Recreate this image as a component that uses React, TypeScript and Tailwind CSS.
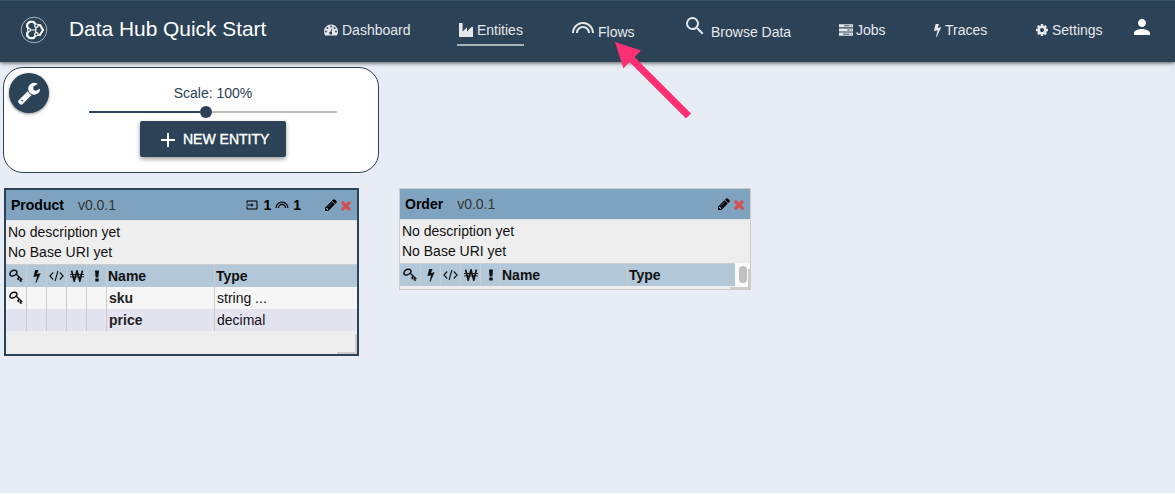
import type { ReactNode } from "react";
import { MdAdd, MdInput, MdLooks, MdPerson, MdSearch } from "react-icons/md";

type IconProps = { className?: string };

function Glyph({ d, box = "0 0 1792 1792", className }: IconProps & { d: string; box?: string }) {
  return (
    <svg viewBox={box} fill="currentColor" className={className}>
      <path d={d} />
    </svg>
  );
}

const BOLT =
  "M885 566q18 20 7 44l-540 1157q-13 25-42 25-4 0-14-2-17-5-25.5-19t-4.5-30l197-808-406 101q-4 1-12 1-18 0-31-11-18-15-13-39l201-825q4-16 18-26t32-10h328q19 0 32 12.5t13 29.5q0 8-5 18l-171 463 396-98q8-2 12-2 19 0 34 15z";
const CLOSE =
  "M1298 1322q0 40-28 68l-136 136q-28 28-68 28t-68-28l-294-294-294 294q-28 28-68 28t-68-28l-136-136q-28-28-28-68t28-68l294-294-294-294q-28-28-28-68t28-68l136-136q28-28 68-28t68 28l294 294 294-294q28-28 68-28t68 28l136 136q28 28 28 68t-28 68l-294 294 294 294q28 28 28 68z";
const PENCIL =
  "M491 1536l91-91-235-235-91 91v107h128v128h107zm523-928q0-22-22-22-10 0-17 7l-542 542q-7 7-7 17 0 22 22 22 10 0 17-7l542-542q7-7 7-17zm-54-192l416 416-832 832h-416v-416zm683 96q0 53-37 90l-166 166-416-416 166-165q36-38 90-38 53 0 91 38l235 234q37 39 37 91z";
const COG =
  "M1152 896q0-106-75-181t-181-75-181 75-75 181 75 181 181 75 181-75 75-181zm512-109v222q0 12-8 23t-20 13l-185 28q-19 54-39 91 35 50 107 138 10 12 10 25t-9 23q-27 37-99 108t-94 71q-12 0-26-9l-138-108q-44 23-91 38-16 136-29 186-7 28-36 28h-222q-14 0-24.5-8.5t-11.5-21.5l-28-184q-49-16-90-37l-141 107q-10 9-25 9-14 0-25-11-126-114-165-168-7-10-7-23 0-12 8-23 15-21 51-66.5t54-70.5q-27-50-41-99l-183-27q-13-2-21-12.5t-8-23.5v-222q0-12 8-23t19-13l186-28q14-46 39-92-40-57-107-138-10-12-10-24 0-10 9-23 26-36 98.5-107.5t94.5-71.5q13 0 26 10l138 107q44-23 91-38 16-136 29-186 7-28 36-28h222q14 0 24.5 8.5t11.5 21.5l28 184q49 16 90 37l142-107q9-9 24-9 13 0 25 10 129 119 165 170 7 8 7 22 0 12-8 23-15 21-51 66.5t-54 70.5q26 50 41 98l183 28q13 2 21 12.5t8 23.5z";
const WRENCH =
  "M448 1472q0-26-19-45t-45-19-45 19-19 45 19 45 45 19 45-19 19-45zm644-420l-682 682q-37 37-90 37-52 0-91-37l-106-108q-38-36-38-90 0-53 38-91l681-681q39 98 114.5 173.5t173.5 114.5zm634-435q0 39-23 106-47 134-164.5 217.5t-258.5 83.5q-185 0-316.5-131.5t-131.5-316.5 131.5-316.5 316.5-131.5q58 0 121.5 16.5t107.5 46.5q16 11 16 28t-16 28l-293 169v224l193 107q5-3 79-48.5t135.5-81 70.5-35.5q15 0 23.5 10t8.5 25z";

function Logo() {
  return (
    <svg viewBox="0 0 28 28" fill="none" stroke="#fff" className="size-7">
      <circle cx="14" cy="14" r="12.8" stroke="#a5b0ba" strokeWidth="1" />
      <path
        d="M15.2 8 13.6 5.9H9.4L7.2 8.3v2.6l1.6 2M8.8 15.1l-1.6 2v2.6l2.2 2.4h4.2l1.6-2.1M18 9h2l3 5-3 5h-2"
        strokeWidth="2.2"
        strokeLinejoin="round"
      />
      <path d="M10 14h5.5M15.8 11.4v5.2" strokeWidth="1.2" />
      <circle cx="9" cy="14" r="1.5" fill="#2c4256" strokeWidth="1.2" />
      <circle cx="16.4" cy="9.7" r="1.7" fill="#2c4256" strokeWidth="1.2" />
      <circle cx="16.4" cy="18.3" r="1.7" fill="#2c4256" strokeWidth="1.2" />
    </svg>
  );
}

function Gauge() {
  return (
    <svg viewBox="0 0 14 12" className="h-3 w-3.5">
      <path d="M7 0.5a7 7 0 0 0-7 7c0 1.4.4 2.7 1.1 3.8.1.2.3.2.5.2h10.8c.2 0 .4 0 .5-.2A7 7 0 0 0 7 .5z" fill="currentColor" />
      <g fill="#2c4256">
        <circle cx="2" cy="7.5" r="0.95" />
        <circle cx="3.5" cy="4" r="0.95" />
        <circle cx="7" cy="2.5" r="0.95" />
        <circle cx="10.5" cy="4" r="0.95" />
        <circle cx="12" cy="7.5" r="0.95" />
        <circle cx="6.7" cy="9" r="1.5" />
      </g>
      <path d="M6.8 8.8 7.9 4.7" stroke="#2c4256" strokeWidth="0.9" />
    </svg>
  );
}

function Factory() {
  return (
    <svg viewBox="0 0 14 14" className="size-3.5" fill="currentColor">
      <path d="M0 0h3.6v8.4L8 4.2v4.2l4.2-4.1q1.5-1.2 1.8.2V14H0z" />
    </svg>
  );
}

function Server() {
  return (
    <svg viewBox="0 0 14 12" className="h-3 w-3.5">
      <path d="M0 .2h14v3.1H0zM0 4.4h14v3.1H0zM0 8.6h14v3.1H0z" fill="currentColor" />
      <path d="M5 1.75h5.5M8.5 5.95h2.5M4 10.15h6.5" stroke="#2c4256" strokeWidth="0.9" />
      <path d="M11.8 1.75h1M11.8 5.95h1M11.8 10.15h1" stroke="#2c4256" strokeWidth="0.8" />
    </svg>
  );
}

function Key() {
  return (
    <svg viewBox="0 0 14 14" fill="none" stroke="currentColor" className="size-3.5">
      <path d="M1 5.6C.7 3.2 3 1.3 5.3 1.3c2.4 0 3.3 1.6 2.2 3.4C6.300 6.700 1.400 8.300 1 5.600z" strokeWidth="1.5" />
      <path d="M7 5l6.300 6M10.200 8.200 8.800 9.900l1.400 1M12.400 10.200l-1.200 1.500 1.300 1" strokeWidth="1.400" />
    </svg>
  );
}

function Code() {
  return (
    <svg viewBox="0 0 15 12" fill="none" stroke="currentColor" strokeWidth="1.1" className="h-3 w-[15px]">
      <path d="M4.2 2.500.900 6l3.300 3.500M10.800 2.500 14.100 6l-3.300 3.500M8.900 1 6.100 11" />
    </svg>
  );
}

function Won() {
  return (
    <svg viewBox="0 0 14 12" fill="none" stroke="currentColor" className="h-3 w-3.5">
      <path d="M1.600.600l2.600 10.400L7 1l2.800 10L12.400.600" strokeWidth="1.700" />
      <path d="M0 4.500h14M0 6.900h14" strokeWidth="0.900" />
    </svg>
  );
}

function Bang() {
  return (
    <svg viewBox="0 0 6 12" fill="currentColor" className="h-3 w-1.5">
      <path d="M1 .500h4l-.600 7H1.600zM1.300 8.600h3.400v2.900H1.300z" />
    </svg>
  );
}

function NavItem({ icon, label, className, labelClass = "" }: { icon: ReactNode; label: string; className: string; labelClass?: string }) {
  return (
    <a className={`flex shrink-0 items-center whitespace-nowrap ${className}`}>
      {icon}
      <span className={labelClass}>{label}</span>
    </a>
  );
}

function Header() {
  return (
    <header className="relative flex h-[62px] border-t border-[#3b5366] bg-[#2c4256] text-sm text-[#e6e8eb] shadow-[0_1px_4px_rgba(0,0,0,0.65)]">
      <div className="mt-[15px] ml-5 shrink-0">
        <Logo />
      </div>
      <h1 className="mt-[13px] ml-[21px] w-[200px] shrink-0 text-[20.9px] leading-[30px] whitespace-nowrap text-white">
        Data Hub Quick Start
      </h1>
      <nav className="flex items-start">
        <NavItem className="mt-[19px] ml-[55px] h-5 w-[87px] gap-1" icon={<Gauge />} label="Dashboard" />
        <NavItem className="mt-[16px] ml-[46px] h-[29px] w-[67px] gap-1 border-b-2 border-[#a9b3bb] pb-px pl-[2px]" icon={<Factory />} label="Entities" />
        <NavItem className="mt-[19px] ml-[47px] h-5 w-[66px] gap-[3px]" icon={<MdLooks className="mb-1 size-6" />} label="Flows" labelClass="pt-[3px]" />
        <NavItem className="mt-[19px] ml-[46px] h-5 w-[110px] gap-1" icon={<MdSearch className="mb-2 size-6" />} label="Browse Data" labelClass="pt-[3px]" />
        <NavItem className="mt-[19px] ml-[46px] h-5 w-[49px] gap-[3px]" icon={<Server />} label="Jobs" />
        <NavItem className="mt-[19px] ml-[46px] h-5 w-[55px] gap-1" icon={<Glyph d={BOLT} box="0 0 896 1792" className="h-[14px] w-[7px]" />} label="Traces" />
        <NavItem className="mt-[19px] ml-[46px] h-5 w-[68px] gap-[3px]" icon={<Glyph d={COG} className="size-3.5" />} label="Settings" />
        <MdPerson className="mt-[14px] ml-[27px] size-6 shrink-0 text-white" />
      </nav>
      <svg viewBox="0 0 78 78" className="absolute top-[39px] left-[614px] size-[78px]" fill="#ff2f73">
        <path d="M1 2l26 8.500-6.500 6.500 56.500 56.500-5 5-56.500-56.500-6 6.500z" />
      </svg>
    </header>
  );
}

function Toolbox() {
  return (
    <section className="mt-[5px] ml-[3px] flex h-[106px] w-[376px] rounded-[20px] border border-[#2c4256] bg-white pt-[5px] pl-[5px]">
      <button className="flex size-10 shrink-0 items-center justify-center rounded-full bg-[#2c4256] text-white shadow-[0_1px_3px_rgba(0,0,0,0.45)]">
        <Glyph d={WRENCH} className="size-6" />
      </button>
      <div className="ml-10 flex w-[248px] flex-col items-center text-sm text-[#2c4256]">
        <div className="mt-[10px] h-5 leading-5">Scale: 100%</div>
        <div className="mt-[3px] flex h-3 w-full items-center">
          <div className="h-0.5 w-[111px] bg-[#2c4256]" />
          <div className="size-3 rounded-full bg-[#2c4256]" />
          <div className="h-0.5 flex-1 bg-[#bdbdbd]" />
        </div>
        <button className="mt-[3px] flex h-9 w-[146px] shrink-0 items-center rounded-[2px] bg-[#2c4256] pl-4 text-white shadow-[0_2px_4px_rgba(0,0,0,0.4)]">
          <MdAdd className="mt-px mr-[3px] size-6" />
          <span className="whitespace-nowrap [-webkit-text-stroke:0.4px_white]">NEW ENTITY</span>
        </button>
      </div>
    </section>
  );
}

type Property = { name: string; type: string; primaryKey?: boolean };

const cell = "flex items-center justify-center border-r border-[#ccc]";

function PropertyTable({ rows, columns }: { rows: Property[]; columns: string }) {
  return (
    <div className="border-t border-[#ccc]">
      <div className={`grid h-[22px] bg-[#b2c7d8] font-bold ${columns}`}>
        <div className={cell}><Key /></div>
        <div className={cell}><Glyph d={BOLT} box="0 0 896 1792" className="h-[14px] w-2" /></div>
        <div className={cell}><Code /></div>
        <div className={cell}><Won /></div>
        <div className={cell}><Bang /></div>
        <div className="border-r border-[#ccc] pl-px leading-[22px]">Name</div>
        <div className="pl-px leading-[22px]">Type</div>
      </div>
      {rows.map((row) => (
        <div key={row.name} className={`grid h-[22px] odd:bg-[#e4e3f0] even:bg-[#f6f6f6] ${columns}`}>
          <div className={cell}>{row.primaryKey && <Key />}</div>
          <div className={cell} />
          <div className={cell} />
          <div className={cell} />
          <div className={cell} />
          <div className="border-r border-[#ccc] pl-0.5 leading-[22px] font-bold text-[#222]">{row.name}</div>
          <div className="pl-0.5 leading-[22px]">{row.type}</div>
        </div>
      ))}
    </div>
  );
}

function EntityHeader({ name, children }: { name: string; children?: ReactNode }) {
  return (
    <div className="flex h-[30px] shrink-0 items-center bg-[#7fa3bf] pr-[6px] pl-[5px]">
      <span className="font-bold text-black">{name}</span>
      <span className="ml-[14px] text-[#333]">v0.0.1</span>
      <div className="ml-auto flex items-center font-bold text-black">{children}</div>
      <Glyph d={PENCIL} className="size-3.5 text-black" />
      <Glyph d={CLOSE} box="110 238 1188 1316" className="ml-[3px] h-[11px] w-[10px] text-[#d2504f]" />
    </div>
  );
}

function Description() {
  return (
    <div className="h-[44px] border-t border-[#dfe3e6] pt-px pl-[2px] leading-5">
      <p>No description yet</p>
      <p>No Base URI yet</p>
    </div>
  );
}

export default function App() {
  return (
    <div className="h-[494px] w-[1175px] overflow-hidden border-b border-[#f6f8fb] bg-[#e8edf5] font-['Liberation_Sans',Arial,sans-serif] text-sm text-[#111]">
      <Header />
      <Toolbox />
      <main className="mt-[15px] ml-1 flex items-start gap-[40px]">
        <article className="relative h-[168px] w-[355px] border-2 border-[#2c4256] bg-[#eee]">
          <EntityHeader name="Product">
            <MdInput className="mr-[5px] size-3" />
            <span>1</span>
            <MdLooks className="mx-1 size-3.5" />
            <span className="mr-[23px]">1</span>
          </EntityHeader>
          <Description />
          <PropertyTable
            columns="grid-cols-[21px_20px_20px_20px_20px_108px_1fr]"
            rows={[
              { name: "sku", type: "string ...", primaryKey: true },
              { name: "price", type: "decimal" },
            ]}
          />
          <span className="absolute right-0 bottom-0 h-5 w-5 bg-[linear-gradient(#ccc,#ccc),linear-gradient(#ccc,#ccc)] bg-[size:2px_100%,100%_2px] bg-[position:right,bottom] bg-no-repeat" />
        </article>
        <article className="relative h-[102px] w-[352px] border border-[#ccc] bg-[#eee]">
          <EntityHeader name="Order" />
          <Description />
          <div className="flex">
            <div className="w-[335px]">
              <PropertyTable columns="grid-cols-[21px_20px_20px_20px_20px_127px_1fr]" rows={[]} />
            </div>
            <div className="flex h-6 flex-1 justify-center bg-[#fafafa] pt-[3px]">
              <span className="h-[17px] w-2 rounded-full bg-[#c1c1c1]" />
            </div>
          </div>
          <span className="absolute right-0 bottom-0 h-5 w-5 bg-[linear-gradient(#ccc,#ccc),linear-gradient(#ccc,#ccc)] bg-[size:2px_100%,100%_2px] bg-[position:right,bottom] bg-no-repeat" />
        </article>
      </main>
    </div>
  );
}
